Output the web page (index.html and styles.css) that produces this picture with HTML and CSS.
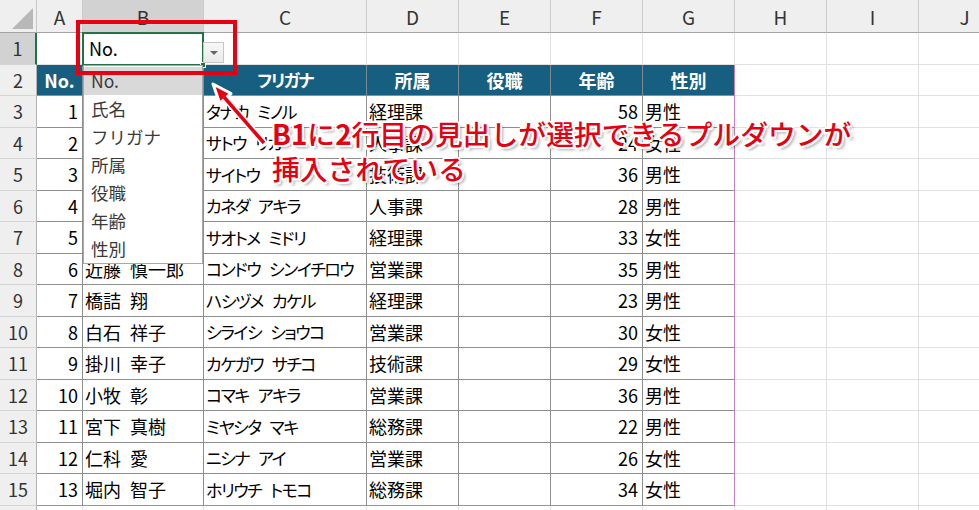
FILE: index.html
```html
<!DOCTYPE html>
<html lang="ja">
<head>
<meta charset="utf-8">
<link rel="stylesheet" href="styles.css">
</head>
<body>
<div class="sheet">
  <div class="row head">
    <div class="cell corner"></div>
    <div class="cell ch">A</div>
    <div class="cell ch sel">B</div>
    <div class="cell ch">C</div>
    <div class="cell ch">D</div>
    <div class="cell ch">E</div>
    <div class="cell ch">F</div>
    <div class="cell ch">G</div>
    <div class="cell ch">H</div>
    <div class="cell ch">I</div>
    <div class="cell ch">J</div>
  </div>
  <div class="row">
    <div class="cell rh selrow">1</div>
    <div class="cell"></div>
    <div class="cell b1">No.</div>
    <div class="cell"></div><div class="cell"></div><div class="cell"></div><div class="cell"></div><div class="cell"></div><div class="cell"></div><div class="cell"></div><div class="cell"></div>
  </div>
  <div class="row">
    <div class="cell rh">2</div>
    <div class="cell th">No.</div>
    <div class="cell th">氏名</div>
    <div class="cell th kana">フリガナ</div>
    <div class="cell th">所属</div>
    <div class="cell th">役職</div>
    <div class="cell th">年齢</div>
    <div class="cell th pink">性別</div>
    <div class="cell"></div><div class="cell"></div><div class="cell"></div>
  </div>
  <div class="row">
    <div class="cell rh">3</div>
    <div class="cell t num">1</div><div class="cell t">田中&ensp;稔</div><div class="cell t kana">タナカ&ensp;&thinsp;ミノル</div><div class="cell t">経理課</div><div class="cell t"></div><div class="cell t num">58</div><div class="cell t pink">男性</div>
    <div class="cell"></div><div class="cell"></div><div class="cell"></div>
  </div>
  <div class="row">
    <div class="cell rh">4</div>
    <div class="cell t num">2</div><div class="cell t">佐藤&ensp;梨花</div><div class="cell t kana">サトウ&ensp;&thinsp;リカ</div><div class="cell t">人事課</div><div class="cell t"></div><div class="cell t num">24</div><div class="cell t pink">女性</div>
    <div class="cell"></div><div class="cell"></div><div class="cell"></div>
  </div>
  <div class="row">
    <div class="cell rh">5</div>
    <div class="cell t num">3</div><div class="cell t">斎藤&ensp;健</div><div class="cell t kana">サイトウ</div><div class="cell t">技術課</div><div class="cell t"></div><div class="cell t num">36</div><div class="cell t pink">男性</div>
    <div class="cell"></div><div class="cell"></div><div class="cell"></div>
  </div>
  <div class="row">
    <div class="cell rh">6</div>
    <div class="cell t num">4</div><div class="cell t">金田&ensp;彰</div><div class="cell t kana">カネダ&ensp;&thinsp;アキラ</div><div class="cell t">人事課</div><div class="cell t"></div><div class="cell t num">28</div><div class="cell t pink">男性</div>
    <div class="cell"></div><div class="cell"></div><div class="cell"></div>
  </div>
  <div class="row">
    <div class="cell rh">7</div>
    <div class="cell t num">5</div><div class="cell t">早乙女&ensp;翠</div><div class="cell t kana">サオトメ&ensp;&thinsp;ミドリ</div><div class="cell t">経理課</div><div class="cell t"></div><div class="cell t num">33</div><div class="cell t pink">女性</div>
    <div class="cell"></div><div class="cell"></div><div class="cell"></div>
  </div>
  <div class="row">
    <div class="cell rh">8</div>
    <div class="cell t num">6</div><div class="cell t">近藤&ensp;慎一郎</div><div class="cell t kana">コンドウ&ensp;&thinsp;シンイチロウ</div><div class="cell t">営業課</div><div class="cell t"></div><div class="cell t num">35</div><div class="cell t pink">男性</div>
    <div class="cell"></div><div class="cell"></div><div class="cell"></div>
  </div>
  <div class="row">
    <div class="cell rh">9</div>
    <div class="cell t num">7</div><div class="cell t">橋詰&ensp;翔</div><div class="cell t kana">ハシヅメ&ensp;&thinsp;カケル</div><div class="cell t">経理課</div><div class="cell t"></div><div class="cell t num">23</div><div class="cell t pink">男性</div>
    <div class="cell"></div><div class="cell"></div><div class="cell"></div>
  </div>
  <div class="row">
    <div class="cell rh">10</div>
    <div class="cell t num">8</div><div class="cell t">白石&ensp;祥子</div><div class="cell t kana">シライシ&ensp;&thinsp;ショウコ</div><div class="cell t">営業課</div><div class="cell t"></div><div class="cell t num">30</div><div class="cell t pink">女性</div>
    <div class="cell"></div><div class="cell"></div><div class="cell"></div>
  </div>
  <div class="row">
    <div class="cell rh">11</div>
    <div class="cell t num">9</div><div class="cell t">掛川&ensp;幸子</div><div class="cell t kana">カケガワ&ensp;&thinsp;サチコ</div><div class="cell t">技術課</div><div class="cell t"></div><div class="cell t num">29</div><div class="cell t pink">女性</div>
    <div class="cell"></div><div class="cell"></div><div class="cell"></div>
  </div>
  <div class="row">
    <div class="cell rh">12</div>
    <div class="cell t num">10</div><div class="cell t">小牧&ensp;彰</div><div class="cell t kana">コマキ&ensp;&thinsp;アキラ</div><div class="cell t">営業課</div><div class="cell t"></div><div class="cell t num">36</div><div class="cell t pink">男性</div>
    <div class="cell"></div><div class="cell"></div><div class="cell"></div>
  </div>
  <div class="row">
    <div class="cell rh">13</div>
    <div class="cell t num">11</div><div class="cell t">宮下&ensp;真樹</div><div class="cell t kana">ミヤシタ&ensp;&thinsp;マキ</div><div class="cell t">総務課</div><div class="cell t"></div><div class="cell t num">22</div><div class="cell t pink">男性</div>
    <div class="cell"></div><div class="cell"></div><div class="cell"></div>
  </div>
  <div class="row">
    <div class="cell rh">14</div>
    <div class="cell t num">12</div><div class="cell t">仁科&ensp;愛</div><div class="cell t kana">ニシナ&ensp;&thinsp;アイ</div><div class="cell t">営業課</div><div class="cell t"></div><div class="cell t num">26</div><div class="cell t pink">女性</div>
    <div class="cell"></div><div class="cell"></div><div class="cell"></div>
  </div>
  <div class="row">
    <div class="cell rh">15</div>
    <div class="cell t last num">13</div><div class="cell t last">堀内&ensp;智子</div><div class="cell t last kana">ホリウチ&ensp;&thinsp;トモコ</div><div class="cell t last">総務課</div><div class="cell t last"></div><div class="cell t last num">34</div><div class="cell t last pink">女性</div>
    <div class="cell"></div><div class="cell"></div><div class="cell"></div>
  </div>
  <div class="row">
    <div class="cell rh">16</div>
    <div class="cell"></div><div class="cell"></div><div class="cell"></div><div class="cell"></div><div class="cell"></div><div class="cell"></div><div class="cell"></div><div class="cell"></div><div class="cell"></div><div class="cell"></div>
  </div>
</div>

<div class="selbox"><span class="handle"></span></div>
<div class="ddbtn"><span class="tri"></span></div>
<ul class="dlist">
  <li class="on">No.</li>
  <li>氏名</li>
  <li>フリガナ</li>
  <li>所属</li>
  <li>役職</li>
  <li>年齢</li>
  <li>性別</li>
</ul>
<div class="redbox"></div>
<svg class="arrow" width="979" height="510" viewBox="0 0 979 510">
  <line x1="264" y1="143" x2="224" y2="97" stroke="#ffffff" stroke-width="7" stroke-linecap="round"/>
  <polygon points="213,84 231,93.5 219.7,103.3" fill="#e60012" stroke="#ffffff" stroke-width="3" stroke-linejoin="round"/>
  <line x1="264" y1="143" x2="224" y2="97" stroke="#e60012" stroke-width="3.5"/>
</svg>
<div class="callout">
  <p><b>B1</b>に<b>2</b>行目の見出しが選択できるプルダウンが</p>
  <p>挿入されている</p>
</div>
</body>
</html>
```

FILE: styles.css
```css
* { box-sizing: border-box; margin: 0; padding: 0; }
html, body { width: 979px; height: 510px; overflow: hidden; background: #ffffff; }
body {
  position: relative;
  font-family: "Noto Sans CJK JP", "Noto Sans", sans-serif;
  color: #000;
}
.sheet { display: flex; flex-direction: column; width: 979px; height: 510px; overflow: hidden; }
.row {
  display: grid;
  grid-template-columns: 37px 46px 121px 163px 92px 92px 92px 92px 92px 92px 92px;
  height: 31.53px;
  flex: none;
}
.row.head { height: 33px; }
.cell {
  border-right: 1px solid #e1e1e1;
  border-bottom: 1px solid #e1e1e1;
  display: flex;
  align-items: center;
  padding: 0 2px;
  font-size: 18px;
  white-space: pre;
  overflow: hidden;
  font-feature-settings: "palt";
}
.kana { font-size: 17px; letter-spacing: -1.5px; }
.corner {
  background: #efefef;
  border-right: 1px solid #c6c6c6;
  border-bottom: 1px solid #a3a3a3;
  position: relative;
}
.corner::after {
  content: "";
  position: absolute;
  right: 3px;
  bottom: 3px;
  width: 21px;
  height: 21px;
  background: #b8b8b8;
  clip-path: polygon(100% 0, 100% 100%, 0 100%);
}
.ch {
  background: #efefef;
  border-right: 1px solid #cbcbcb;
  border-bottom: 1px solid #a3a3a3;
  justify-content: center;
  color: #333333;
  font-size: 19px;
  font-feature-settings: normal;
}
.ch.sel { background: #d2d2d2; }
.rh {
  background: #efefef;
  border-right: 1px solid #b4b4b4;
  border-bottom: 1px solid #d4d4d4;
  justify-content: center;
  color: #333333;
  font-size: 18px;
  font-feature-settings: normal;
}
.rh.selrow { background: #d2d2d2; border-right: 2px solid #217346; }
.b1 { padding-left: 6px; }
.t { border-right-color: #8e8e8e; border-bottom-color: #8e8e8e; }
.num { justify-content: flex-end; padding-right: 4px; }
.th {
  background: #175f80;
  color: #ffffff;
  font-weight: 700;
  justify-content: center;
  border-right-color: #7c8a93;
  border-bottom-color: #8e8e8e;
}
.pink { border-right-color: #c77fc4; }
.last { border-bottom-color: #5aa6d8; }

.selbox {
  position: absolute;
  left: 82px;
  top: 32px;
  width: 122px;
  height: 34px;
  border: 2px solid #217346;
}
.handle {
  position: absolute;
  right: -4px;
  bottom: -4px;
  width: 6px;
  height: 6px;
  background: #217346;
  border: 1px solid #ffffff;
}
.ddbtn {
  position: absolute;
  left: 203px;
  top: 42px;
  width: 21px;
  height: 21px;
  border: 1px solid #c6c6c6;
  background: linear-gradient(#f8f8f8, #e9e9e9);
  display: flex;
  align-items: center;
  justify-content: center;
}
.tri {
  width: 0;
  height: 0;
  border-left: 4px solid transparent;
  border-right: 4px solid transparent;
  border-top: 4px solid #666666;
}
.dlist {
  position: absolute;
  left: 83px;
  top: 65px;
  width: 120px;
  height: 199px;
  background: #ffffff;
  border: 1px solid #a8a8a8;
  list-style: none;
  padding-top: 1px;
}
.dlist li {
  height: 28px;
  line-height: 28px;
  padding-left: 7px;
  font-size: 17.5px;
  color: #3a3a3a;
}
.dlist li.on { background: #d9d9d9; }
.redbox {
  position: absolute;
  left: 76px;
  top: 20px;
  width: 161px;
  height: 55px;
  border: 4px solid #e60012;
}
.arrow { position: absolute; left: 0; top: 0; }
.callout {
  position: absolute;
  left: 272px;
  top: 116px;
  color: #e60012;
  font-size: 27.8px;
  line-height: 35px;
  font-weight: 500;
  white-space: nowrap;
  text-shadow:
    2px 0 0 #fff, -2px 0 0 #fff, 0 2px 0 #fff, 0 -2px 0 #fff,
    1.5px 1.5px 0 #fff, -1.5px 1.5px 0 #fff, 1.5px -1.5px 0 #fff, -1.5px -1.5px 0 #fff,
    3px 3px 3px rgba(0, 0, 0, 0.35);
}
.callout b { font-weight: 700; }
```
